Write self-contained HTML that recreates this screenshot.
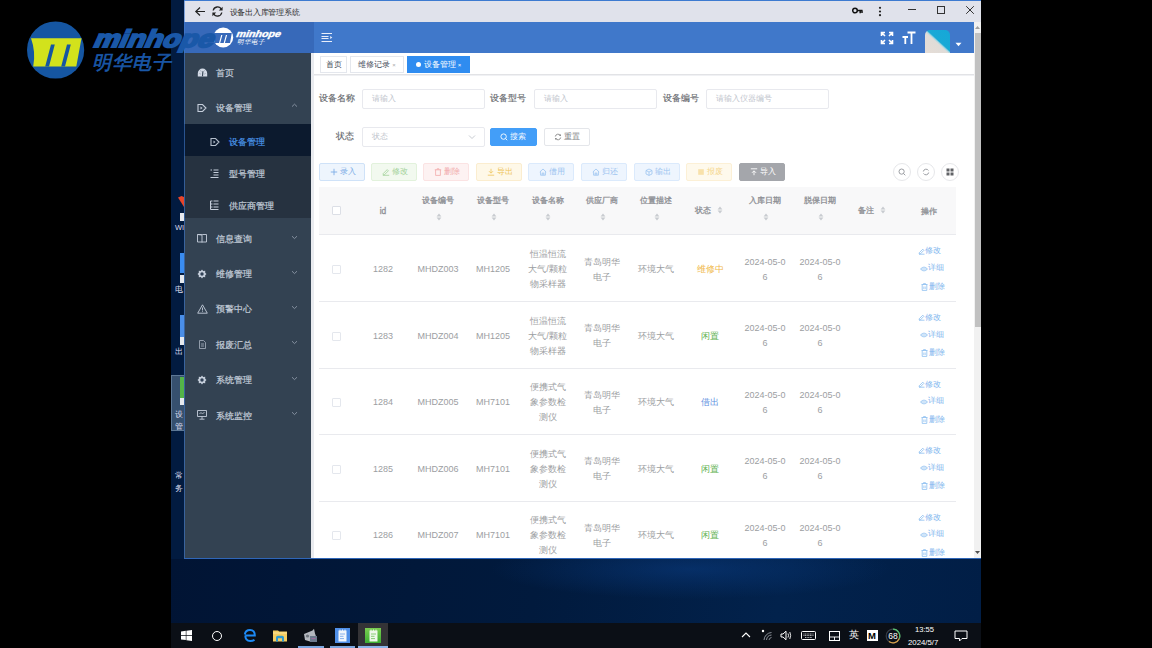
<!DOCTYPE html>
<html><head><meta charset="utf-8">
<style>
*{margin:0;padding:0;box-sizing:border-box}
html,body{width:1152px;height:648px;overflow:hidden;background:#000;font-family:"Liberation Sans",sans-serif}
.a{position:absolute}
.t{position:absolute;white-space:nowrap;line-height:1}
#desk{left:171px;top:0;width:810px;height:623px;background:#021b40}
#taskbar{left:171px;top:623px;width:810px;height:25px;background:#0b0f16}
#win{left:184px;top:0;width:797px;height:558px;background:#fff;border-top:1px solid #3d7ad0}
#titlebar{left:184px;top:1px;width:797px;height:21px;background:#e0e2eb}
#header{left:184px;top:22px;width:790px;height:31px;background:#4078ca}
#side{left:184px;top:53px;width:127px;height:505px;background:#334252}
#scroll{left:974px;top:22px;width:7px;height:536px;background:#f1f1f1}
#thumb{left:975px;top:33px;width:6px;height:294px;background:#c1c1c1}
.mi{color:#c3cdd9;font-size:9px;-webkit-text-stroke:0.2px currentColor}
.sub{left:184px;width:127px;background:#263240}
.tab{position:absolute;top:56px;height:17px;border:1px solid #e4e7ed;background:#fff;color:#495060;font-size:8px;line-height:15px;text-align:center;white-space:nowrap}
.lab{color:#66686d;font-size:9px;-webkit-text-stroke:0.15px #66686d}
.inp{position:absolute;height:20px;border:1px solid #e8e9ee;border-radius:2px;background:#fff;color:#c0c4cc;font-size:8px;line-height:18px;padding-left:9px;white-space:nowrap}
.btn{position:absolute;height:18px;border:1px solid;border-radius:2px;font-size:8px;line-height:16px;text-align:center;white-space:nowrap}
.circ{position:absolute;width:18px;height:18px;border:1px solid #e6e7ea;border-radius:50%;background:#fff}
.hd{position:absolute;width:70px;text-align:center;color:#8e9095;font-size:8.4px;-webkit-text-stroke:0.3px #8e9095;line-height:1;white-space:nowrap}
.cell{position:absolute;width:70px;text-align:center;color:#9c9ea2;font-size:9px;line-height:15px;white-space:nowrap}
.act{position:absolute;color:#7fb6ee;font-size:8px;line-height:1;white-space:nowrap}
</style></head><body>
<div id="desk" class="a"></div>
<div id="taskbar" class="a"></div>
<div id="win" class="a"></div>
<div id="titlebar" class="a"></div>
<div id="header" class="a"></div>
<div id="side" class="a"></div>
<div id="scroll" class="a"></div>
<div id="thumb" class="a"></div>
<!-- titlebar -->
<svg class="a" style="left:194px;top:6px" width="12" height="11" viewBox="0 0 12 11"><path d="M11 5.5H2M6 1.5L1.8 5.5L6 9.5" stroke="#222" stroke-width="1.2" fill="none"/></svg>
<svg class="a" style="left:211px;top:6px" width="13" height="11" viewBox="0 0 13 11"><path d="M2.2 4.5A4.3 4.3 0 0 1 10.4 3.6M10.8 6.5A4.3 4.3 0 0 1 2.6 7.4" stroke="#222" stroke-width="1.3" fill="none"/><path d="M11.6 0.8V4.6H7.8Z M1.4 10.2V6.4H5.2Z" fill="#222"/></svg>
<div class="t" style="left:229.5px;top:8.5px;font-size:8px;letter-spacing:-0.25px;color:#2a2a2a">设备出入库管理系统</div>
<svg class="a" style="left:852px;top:7px" width="11" height="7" viewBox="0 0 11 7"><circle cx="3" cy="3.5" r="2.3" fill="none" stroke="#111" stroke-width="1.5"/><path d="M5 3.5H10.5M8.2 3.5V6.2M10 3.5V6" stroke="#111" stroke-width="1.5"/></svg>
<svg class="a" style="left:878px;top:6px" width="4" height="11" viewBox="0 0 4 11"><circle cx="2" cy="1.8" r="1.1" fill="#222"/><circle cx="2" cy="5.5" r="1.1" fill="#222"/><circle cx="2" cy="9.2" r="1.1" fill="#222"/></svg>
<div class="a" style="left:908px;top:9px;width:8px;height:1px;background:#333"></div>
<div class="a" style="left:937px;top:6px;width:8px;height:8px;border:1px solid #333"></div>
<svg class="a" style="left:965px;top:5px" width="10" height="10" viewBox="0 0 10 10"><path d="M1.2 1.2L8.8 8.8M8.8 1.2L1.2 8.8" stroke="#333" stroke-width="1"/></svg>
<!-- header -->
<div class="a" style="left:184px;top:22px;width:130px;height:31px;background:#3769b9"></div>
<svg class="a" style="left:321px;top:32px" width="12" height="11" viewBox="0 0 12 11"><path d="M0.5 1.5H11M0.5 4.5H7.5M0.5 6.5H7.5M0.5 9.5H11" stroke="#e8eefa" stroke-width="1.2"/><path d="M9.2 4L11.3 5.5L9.2 7Z" fill="#e8eefa"/></svg>
<svg class="a" style="left:880px;top:31px" width="14" height="14" viewBox="0 0 14 14"><g stroke="#fff" stroke-width="1.6" fill="none"><path d="M1.5 1.5L5 5M1.5 5V1.5H5"/><path d="M12.5 1.5L9 5M12.5 5V1.5H9"/><path d="M1.5 12.5L5 9M1.5 9V12.5H5"/><path d="M12.5 12.5L9 9M12.5 9V12.5H9"/></g></svg>
<svg class="a" style="left:902px;top:31px" width="14" height="14" viewBox="0 0 14 14"><g stroke="#fff" stroke-width="1.8" fill="none"><path d="M5.5 1.5H13.5M9.5 1.5V13"/><path d="M0.5 6H6M3.3 6V13"/></g></svg>
<div class="a" style="left:925px;top:30px;width:25px;height:23px;border-radius:5px 5px 0 0;background:linear-gradient(to top right,#e6ddd6 0%,#e0dcd8 46%,#a8d8e2 50%,#18a9d6 54%,#15a8d8 100%)"></div>
<svg class="a" style="left:955px;top:42px" width="7" height="5" viewBox="0 0 7 5"><path d="M0.5 0.8H6.5L3.5 4.2Z" fill="#fff"/></svg>
<div class="a sub" style="top:124px;height:94px"></div>
<div class="a" style="left:184px;top:124px;width:127px;height:32px;background:#0c1a2e"></div>
<svg class="a" style="left:196.5px;top:67.5px" width="11" height="9" viewBox="0 0 11 9"><path d="M0.8 8.5V5.3A4.7 4.7 0 0 1 10.2 5.3V8.5Z" fill="#d3dae6"/><path d="M5.5 8.2L5.9 3.2" stroke="#334252" stroke-width="1.1"/><path d="M2.6 5.5L3.5 6M8.4 5.5L7.5 6M3.6 2.6L4.2 3.4M7.4 2.6L6.8 3.4" stroke="#6c7888" stroke-width="0.8"/></svg>
<div class="t mi" style="left:215.5px;top:69px">首页</div>
<svg class="a" style="left:197px;top:103px" width="10" height="10" viewBox="0 0 10 10"><path d="M1 1.5H5.5L9 5L5.5 8.5H1Z" fill="none" stroke="#c5cedb" stroke-width="1.1"/><path d="M3.5 3.5L5.5 5L3.5 6.5Z" fill="#c5cedb"/></svg>
<div class="t mi" style="left:215.5px;top:104px">设备管理</div>
<svg class="a" style="left:291px;top:103px" width="7" height="5" viewBox="0 0 7 5"><path d="M1 3.6L3.5 1.2L6 3.6" stroke="#8d99a8" stroke-width="0.9" fill="none"/></svg>
<svg class="a" style="left:210px;top:137px" width="10" height="10" viewBox="0 0 10 10"><path d="M1 1.5H5.5L9 5L5.5 8.5H1Z" fill="none" stroke="#b5bfcc" stroke-width="1.1"/><path d="M3.5 3.5L5.5 5L3.5 6.5Z" fill="#b5bfcc"/></svg>
<div class="t mi" style="left:228.5px;top:138px;color:#4a95e8">设备管理</div>
<svg class="a" style="left:210px;top:169px" width="9" height="9" viewBox="0 0 9 9"><path d="M0.5 1H2M3.5 1H8.5M3.5 3.5H8.5M3.5 6H8.5M0.5 8.5H8.5" stroke="#c5cedb" stroke-width="1"/></svg>
<div class="t mi" style="left:228.5px;top:170px">型号管理</div>
<svg class="a" style="left:210px;top:200px" width="9" height="10" viewBox="0 0 9 10"><path d="M0.5 1H2.5M0.5 4H2.5M0.5 7H2.5M0.5 9.5H8.5M0.5 1V9.5M3.5 1H8.5M3.5 4H8.5M3.5 7H8.5" stroke="#c5cedb" stroke-width="1.1"/></svg>
<div class="t mi" style="left:228.5px;top:202px">供应商管理</div>
<svg class="a" style="left:197px;top:234px" width="10" height="9" viewBox="0 0 10 9"><path d="M0.5 0.5H4.5Q5 0.5 5 1V8.5M5 1Q5 0.5 5.5 0.5H9.5V8H0.5V0.5Z" fill="none" stroke="#c5cedb" stroke-width="0.9"/></svg>
<div class="t mi" style="left:215.5px;top:235px">信息查询</div>
<svg class="a" style="left:197px;top:269px" width="10" height="10" viewBox="0 0 10 10"><path d="M5 0.5L6.2 2L8.2 1.8L8.2 3.8L9.5 5L8.2 6.2L8.2 8.2L6.2 8L5 9.5L3.8 8L1.8 8.2L1.8 6.2L0.5 5L1.8 3.8L1.8 1.8L3.8 2Z" fill="#c5cedb"/><circle cx="5" cy="5" r="1.7" fill="#304156"/></svg>
<div class="t mi" style="left:215.5px;top:270px">维修管理</div>
<svg class="a" style="left:197px;top:304px" width="11" height="10" viewBox="0 0 11 10"><path d="M5.5 0.8L10.3 9.2H0.7Z" fill="none" stroke="#c5cedb" stroke-width="0.9"/><path d="M5.5 3.5V6.5M5.5 7.3V8" stroke="#c5cedb" stroke-width="0.9"/></svg>
<div class="t mi" style="left:215.5px;top:305px">预警中心</div>
<svg class="a" style="left:199px;top:340px" width="7" height="9" viewBox="0 0 7 9"><path d="M0.5 0.5H4.5L6.5 2.5V8.5H0.5Z" fill="none" stroke="#aab4c2" stroke-width="0.8"/><path d="M2 4H5M2 6H5" stroke="#aab4c2" stroke-width="0.8"/></svg>
<div class="t mi" style="left:215.5px;top:341px">报废汇总</div>
<svg class="a" style="left:197px;top:375px" width="10" height="10" viewBox="0 0 10 10"><path d="M5 0.5L6.2 2L8.2 1.8L8.2 3.8L9.5 5L8.2 6.2L8.2 8.2L6.2 8L5 9.5L3.8 8L1.8 8.2L1.8 6.2L0.5 5L1.8 3.8L1.8 1.8L3.8 2Z" fill="#c5cedb"/><circle cx="5" cy="5" r="1.7" fill="#304156"/></svg>
<div class="t mi" style="left:215.5px;top:376px">系统管理</div>
<svg class="a" style="left:197px;top:410px" width="10" height="10" viewBox="0 0 10 10"><path d="M0.5 0.5H9.5V6.5H0.5Z M5 6.5V9M2.5 9.2H7.5" fill="none" stroke="#c5cedb" stroke-width="0.9"/><path d="M2.5 4L4 2.5L5.5 4L7.5 2" stroke="#c5cedb" stroke-width="0.8" fill="none"/></svg>
<div class="t mi" style="left:215.5px;top:412px">系统监控</div>
<svg class="a" style="left:291px;top:235px" width="7" height="5" viewBox="0 0 7 5"><path d="M1 1.2L3.5 3.6L6 1.2" stroke="#8d99a8" stroke-width="0.9" fill="none"/></svg>
<svg class="a" style="left:291px;top:270px" width="7" height="5" viewBox="0 0 7 5"><path d="M1 1.2L3.5 3.6L6 1.2" stroke="#8d99a8" stroke-width="0.9" fill="none"/></svg>
<svg class="a" style="left:291px;top:305px" width="7" height="5" viewBox="0 0 7 5"><path d="M1 1.2L3.5 3.6L6 1.2" stroke="#8d99a8" stroke-width="0.9" fill="none"/></svg>
<svg class="a" style="left:291px;top:340px" width="7" height="5" viewBox="0 0 7 5"><path d="M1 1.2L3.5 3.6L6 1.2" stroke="#8d99a8" stroke-width="0.9" fill="none"/></svg>
<svg class="a" style="left:291px;top:376px" width="7" height="5" viewBox="0 0 7 5"><path d="M1 1.2L3.5 3.6L6 1.2" stroke="#8d99a8" stroke-width="0.9" fill="none"/></svg>
<svg class="a" style="left:291px;top:411px" width="7" height="5" viewBox="0 0 7 5"><path d="M1 1.2L3.5 3.6L6 1.2" stroke="#8d99a8" stroke-width="0.9" fill="none"/></svg>
<!-- tabs -->
<div class="a" style="left:311px;top:53px;width:3px;height:505px;background:#e9ebef"></div>
<div class="a" style="left:314px;top:74px;width:660px;height:1px;background:#e2e3e6"></div>
<div class="a" style="left:314px;top:75px;width:660px;height:1px;background:#f0f1f4"></div>
<div class="tab" style="left:320px;width:27px">首页</div>
<div class="tab" style="left:350px;width:54px">维修记录 <span style="font-size:6px;color:#aaa">×</span></div>
<div class="tab" style="left:407px;width:63px;background:#2f8cf0;border-color:#2f8cf0;color:#fff"><span style="display:inline-block;width:5px;height:5px;border-radius:50%;background:#fff;margin-right:3px;vertical-align:0px"></span>设备管理 <span style="font-size:6px">×</span></div>
<!-- form -->
<div class="t lab" style="left:319px;top:93.5px">设备名称</div>
<div class="inp" style="left:362px;top:89px;width:123px">请输入</div>
<div class="t lab" style="left:490px;top:93.5px">设备型号</div>
<div class="inp" style="left:534px;top:89px;width:123px">请输入</div>
<div class="t lab" style="left:663px;top:93.5px">设备编号</div>
<div class="inp" style="left:706px;top:89px;width:123px">请输入仪器编号</div>
<div class="t lab" style="left:336px;top:131.5px">状态</div>
<div class="inp" style="left:362px;top:127px;width:123px">状态</div>
<svg class="a" style="left:468px;top:134px" width="8" height="6" viewBox="0 0 8 6"><path d="M1 1.5L4 4.5L7 1.5" stroke="#c0c4cc" stroke-width="0.9" fill="none"/></svg>
<div class="btn" style="left:490px;top:128px;width:47px;background:#439ef8;border-color:#439ef8;color:#f4f8ff;padding-left:9px">搜索</div><svg class="a" style="left:500px;top:133px" width="8" height="8" viewBox="0 0 8 8"><circle cx="3.6" cy="3.6" r="2.7" fill="none" stroke="#fff" stroke-width="0.9"/><path d="M5.6 5.6L7.2 7.2" stroke="#fff" stroke-width="0.9"/></svg>
<div class="btn" style="left:544px;top:128px;width:46px;background:#fff;border-color:#e4e6ea;color:#7a7c80;padding-left:9px">重置</div><svg class="a" style="left:554px;top:133px" width="8" height="8" viewBox="0 0 8 8"><path d="M1.3 3.5A2.8 2.8 0 0 1 6.5 2.6M6.7 4.5A2.8 2.8 0 0 1 1.5 5.4" fill="none" stroke="#888" stroke-width="0.9"/><path d="M6.9 0.9V3H4.8ZM1.1 7.1V5H3.2Z" fill="#888"/></svg>
<!-- toolbar -->
<div class="btn" style="left:319px;top:163px;width:46px;background:#eef5fd;border-color:#cfe2f8"></div><svg class="a" style="left:330px;top:168px" width="8" height="8" viewBox="0 0 8 8"><path d="M4 0.8V7.2M0.8 4H7.2" stroke="#7eaee6" stroke-width="0.9"/></svg><div class="t" style="left:339.5px;top:167.5px;font-size:8px;color:#7eaee6">录入</div>
<div class="btn" style="left:371px;top:163px;width:46px;background:#f2f9ef;border-color:#e2f2dc"></div><svg class="a" style="left:382px;top:168px" width="8" height="8" viewBox="0 0 8 8"><path d="M0.8 7.3H7.2M1.2 5.6L5.2 1.6L6.4 2.8L2.4 6.8H1.2Z" fill="none" stroke="#a2d29a" stroke-width="0.8"/></svg><div class="t" style="left:391.5px;top:167.5px;font-size:8px;color:#a2d29a">修改</div>
<div class="btn" style="left:423px;top:163px;width:46px;background:#fdf2f2;border-color:#fbe3e3"></div><svg class="a" style="left:434px;top:168px" width="8" height="8" viewBox="0 0 8 8"><path d="M0.8 1.8H7.2M3 1.8V0.8H5V1.8M1.6 1.8V7.4H6.4V1.8" fill="none" stroke="#f1aaaa" stroke-width="0.8"/></svg><div class="t" style="left:443.5px;top:167.5px;font-size:8px;color:#f1aaaa">删除</div>
<div class="btn" style="left:476px;top:163px;width:46px;background:#fef8e8;border-color:#fbedcf"></div><svg class="a" style="left:487px;top:168px" width="8" height="8" viewBox="0 0 8 8"><path d="M4 0.8V5M2 3.2L4 5.2L6 3.2M0.8 7.2H7.2" fill="none" stroke="#eec45a" stroke-width="0.8"/></svg><div class="t" style="left:496.5px;top:167.5px;font-size:8px;color:#eec45a">导出</div>
<div class="btn" style="left:528px;top:163px;width:46px;background:#eef5fe;border-color:#dbeafc"></div><svg class="a" style="left:539px;top:168px" width="8" height="8" viewBox="0 0 8 8"><path d="M0.8 4L4 1L7.2 4M1.6 3.5V7.2H6.4V3.5M3.2 7.2V5H4.8V7.2" fill="none" stroke="#9cc4f0" stroke-width="0.8"/></svg><div class="t" style="left:548.5px;top:167.5px;font-size:8px;color:#9cc4f0">借用</div>
<div class="btn" style="left:581px;top:163px;width:46px;background:#eef5fe;border-color:#dbeafc"></div><svg class="a" style="left:592px;top:168px" width="8" height="8" viewBox="0 0 8 8"><path d="M0.8 4L4 1L7.2 4M1.6 3.5V7.2H6.4V3.5M3.2 7.2V5H4.8V7.2" fill="none" stroke="#9cc4f0" stroke-width="0.8"/></svg><div class="t" style="left:601.5px;top:167.5px;font-size:8px;color:#9cc4f0">归还</div>
<div class="btn" style="left:634px;top:163px;width:46px;background:#eef5fe;border-color:#dbeafc"></div><svg class="a" style="left:645px;top:168px" width="8" height="8" viewBox="0 0 8 8"><path d="M1 2.5L4 1L7 2.5V6L4 7.4L1 6ZM1 2.5L4 4L7 2.5M4 4V7.4" fill="none" stroke="#9cc4f0" stroke-width="0.8"/></svg><div class="t" style="left:654.5px;top:167.5px;font-size:8px;color:#9cc4f0">输出</div>
<div class="btn" style="left:686px;top:163px;width:46px;background:#fef9ec;border-color:#fcf0d6"></div><svg class="a" style="left:697px;top:168px" width="8" height="8" viewBox="0 0 8 8"><rect x="1.2" y="1.2" width="5.6" height="5.6" fill="#f5d78e" opacity=".7"/></svg><div class="t" style="left:706.5px;top:167.5px;font-size:8px;color:#f5d78e">报废</div>
<div class="btn" style="left:739px;top:163px;width:46px;background:#a4a6ab;border-color:#a4a6ab"></div><svg class="a" style="left:750px;top:168px" width="8" height="8" viewBox="0 0 8 8"><path d="M4 7.2V3M2 4.8L4 2.8L6 4.8M0.8 0.8H7.2" fill="none" stroke="#ffffff" stroke-width="0.9"/></svg><div class="t" style="left:759.5px;top:167.5px;font-size:8px;color:#ffffff">导入</div>
<div class="circ" style="left:893px;top:163px"></div><svg class="a" style="left:898px;top:168px" width="8" height="8" viewBox="0 0 8 8"><circle cx="3.6" cy="3.6" r="2.6" fill="none" stroke="#909399" stroke-width="0.9"/><path d="M5.5 5.5L7.3 7.3" stroke="#909399" stroke-width="0.9"/></svg>
<div class="circ" style="left:917px;top:163px"></div><svg class="a" style="left:922px;top:168px" width="8" height="8" viewBox="0 0 8 8"><path d="M1.3 3.5A2.8 2.8 0 0 1 6.5 2.6M6.7 4.5A2.8 2.8 0 0 1 1.5 5.4" fill="none" stroke="#909399" stroke-width="0.9"/></svg>
<div class="circ" style="left:941px;top:163px"></div><svg class="a" style="left:946px;top:168px" width="8" height="8" viewBox="0 0 8 8"><rect x="0.5" y="0.5" width="3" height="3" fill="#606266"/><rect x="4.5" y="0.5" width="3" height="3" fill="#606266"/><rect x="0.5" y="4.5" width="3" height="3" fill="#606266"/><rect x="4.5" y="4.5" width="3" height="3" fill="#606266"/></svg>
<div class="a" style="left:319px;top:187px;width:637px;height:48px;background:#f8f8f9"></div>
<div class="a" style="left:319px;top:234px;width:637px;height:1px;background:#e9eaee"></div>
<div class="a" style="left:332px;top:206px;width:9px;height:9px;border:1px solid #dcdfe6;border-radius:1px;background:#fff"></div>
<div class="hd" style="left:348px;top:207px">id</div>
<div class="hd" style="left:403px;top:196px">设备编号</div>
<svg class="a" style="left:435.5px;top:213px" width="6" height="8" viewBox="0 0 6 8"><path d="M0.6 3.4L3 0.6L5.4 3.4ZM0.6 4.6L3 7.4L5.4 4.6Z" fill="#c8cbd0"/></svg>
<div class="hd" style="left:458px;top:196px">设备型号</div>
<svg class="a" style="left:490.5px;top:213px" width="6" height="8" viewBox="0 0 6 8"><path d="M0.6 3.4L3 0.6L5.4 3.4ZM0.6 4.6L3 7.4L5.4 4.6Z" fill="#c8cbd0"/></svg>
<div class="hd" style="left:512.5px;top:196px">设备名称</div>
<svg class="a" style="left:545.0px;top:213px" width="6" height="8" viewBox="0 0 6 8"><path d="M0.6 3.4L3 0.6L5.4 3.4ZM0.6 4.6L3 7.4L5.4 4.6Z" fill="#c8cbd0"/></svg>
<div class="hd" style="left:567px;top:196px">供应厂商</div>
<svg class="a" style="left:599.5px;top:213px" width="6" height="8" viewBox="0 0 6 8"><path d="M0.6 3.4L3 0.6L5.4 3.4ZM0.6 4.6L3 7.4L5.4 4.6Z" fill="#c8cbd0"/></svg>
<div class="hd" style="left:621px;top:196px">位置描述</div>
<svg class="a" style="left:653.5px;top:213px" width="6" height="8" viewBox="0 0 6 8"><path d="M0.6 3.4L3 0.6L5.4 3.4ZM0.6 4.6L3 7.4L5.4 4.6Z" fill="#c8cbd0"/></svg>
<div class="hd" style="left:730px;top:196px">入库日期</div>
<svg class="a" style="left:762.5px;top:213px" width="6" height="8" viewBox="0 0 6 8"><path d="M0.6 3.4L3 0.6L5.4 3.4ZM0.6 4.6L3 7.4L5.4 4.6Z" fill="#c8cbd0"/></svg>
<div class="hd" style="left:785px;top:196px">脱保日期</div>
<svg class="a" style="left:817.5px;top:213px" width="6" height="8" viewBox="0 0 6 8"><path d="M0.6 3.4L3 0.6L5.4 3.4ZM0.6 4.6L3 7.4L5.4 4.6Z" fill="#c8cbd0"/></svg>
<div class="hd" style="left:668px;top:206px">状态</div>
<svg class="a" style="left:716.5px;top:206px" width="6" height="8" viewBox="0 0 6 8"><path d="M0.6 3.4L3 0.6L5.4 3.4ZM0.6 4.6L3 7.4L5.4 4.6Z" fill="#c8cbd0"/></svg>
<div class="hd" style="left:831px;top:206px">备注</div>
<svg class="a" style="left:879.5px;top:206px" width="6" height="8" viewBox="0 0 6 8"><path d="M0.6 3.4L3 0.6L5.4 3.4ZM0.6 4.6L3 7.4L5.4 4.6Z" fill="#c8cbd0"/></svg>
<div class="hd" style="left:894px;top:207px">操作</div>
<div class="a" style="left:319px;top:301.0px;width:637px;height:1px;background:#e9eaee"></div>
<div class="a" style="left:332px;top:265.0px;width:9px;height:9px;border:1px solid #e4e7ed;border-radius:1px;background:#fff"></div>
<div class="cell" style="left:348px;top:262.0px">1282</div>
<div class="cell" style="left:403px;top:262.0px">MHDZ003</div>
<div class="cell" style="left:458px;top:262.0px">MH1205</div>
<div class="cell" style="left:512.5px;top:247.0px">恒温恒流<br>大气/颗粒<br>物采样器</div>
<div class="cell" style="left:567px;top:254.5px">青岛明华<br>电子</div>
<div class="cell" style="left:621px;top:262.0px">环境大气</div>
<div class="cell" style="left:675px;top:262.0px"><span style="color:#f0b848">维修中</span></div>
<div class="cell" style="left:730px;top:254.5px">2024-05-0<br>6</div>
<div class="cell" style="left:785px;top:254.5px">2024-05-0<br>6</div>
<svg class="a" style="left:917.5px;top:247.5px" width="7" height="7" viewBox="0 0 7 7"><path d="M1 6.2H6.5M1.2 4.8L4.8 1.2L5.9 2.3L2.3 5.9H1.2Z" fill="none" stroke="#8cbef0" stroke-width="0.8"/></svg>
<div class="act" style="left:925px;top:247.3px">修改</div>
<svg class="a" style="left:920px;top:265.5px" width="8" height="6" viewBox="0 0 8 6"><path d="M0.5 3Q4 -0.8 7.5 3Q4 6.8 0.5 3Z" fill="none" stroke="#8cbef0" stroke-width="0.8"/><path d="M1.5 3H6.5" stroke="#8cbef0" stroke-width="0.8"/></svg>
<div class="act" style="left:928px;top:264.0px">详细</div>
<svg class="a" style="left:920.5px;top:282.5px" width="7" height="8" viewBox="0 0 7 8"><path d="M0.5 1.5H6.5M2.5 1.5V0.6H4.5V1.5M1.2 1.5V7.4H5.8V1.5" fill="none" stroke="#8cbef0" stroke-width="0.8"/><path d="M2.8 3.5V6M4.2 3.5V6" stroke="#8cbef0" stroke-width="0.7"/></svg>
<div class="act" style="left:928.5px;top:282.5px">删除</div>
<div class="a" style="left:319px;top:367.6px;width:637px;height:1px;background:#e9eaee"></div>
<div class="a" style="left:332px;top:331.6px;width:9px;height:9px;border:1px solid #e4e7ed;border-radius:1px;background:#fff"></div>
<div class="cell" style="left:348px;top:328.6px">1283</div>
<div class="cell" style="left:403px;top:328.6px">MHDZ004</div>
<div class="cell" style="left:458px;top:328.6px">MH1205</div>
<div class="cell" style="left:512.5px;top:313.6px">恒温恒流<br>大气/颗粒<br>物采样器</div>
<div class="cell" style="left:567px;top:321.1px">青岛明华<br>电子</div>
<div class="cell" style="left:621px;top:328.6px">环境大气</div>
<div class="cell" style="left:675px;top:328.6px"><span style="color:#5ab04a">闲置</span></div>
<div class="cell" style="left:730px;top:321.1px">2024-05-0<br>6</div>
<div class="cell" style="left:785px;top:321.1px">2024-05-0<br>6</div>
<svg class="a" style="left:917.5px;top:314.1px" width="7" height="7" viewBox="0 0 7 7"><path d="M1 6.2H6.5M1.2 4.8L4.8 1.2L5.9 2.3L2.3 5.9H1.2Z" fill="none" stroke="#8cbef0" stroke-width="0.8"/></svg>
<div class="act" style="left:925px;top:313.9px">修改</div>
<svg class="a" style="left:920px;top:332.1px" width="8" height="6" viewBox="0 0 8 6"><path d="M0.5 3Q4 -0.8 7.5 3Q4 6.8 0.5 3Z" fill="none" stroke="#8cbef0" stroke-width="0.8"/><path d="M1.5 3H6.5" stroke="#8cbef0" stroke-width="0.8"/></svg>
<div class="act" style="left:928px;top:330.6px">详细</div>
<svg class="a" style="left:920.5px;top:349.1px" width="7" height="8" viewBox="0 0 7 8"><path d="M0.5 1.5H6.5M2.5 1.5V0.6H4.5V1.5M1.2 1.5V7.4H5.8V1.5" fill="none" stroke="#8cbef0" stroke-width="0.8"/><path d="M2.8 3.5V6M4.2 3.5V6" stroke="#8cbef0" stroke-width="0.7"/></svg>
<div class="act" style="left:928.5px;top:349.1px">删除</div>
<div class="a" style="left:319px;top:434.2px;width:637px;height:1px;background:#e9eaee"></div>
<div class="a" style="left:332px;top:398.2px;width:9px;height:9px;border:1px solid #e4e7ed;border-radius:1px;background:#fff"></div>
<div class="cell" style="left:348px;top:395.2px">1284</div>
<div class="cell" style="left:403px;top:395.2px">MHDZ005</div>
<div class="cell" style="left:458px;top:395.2px">MH7101</div>
<div class="cell" style="left:512.5px;top:380.2px">便携式气<br>象参数检<br>测仪</div>
<div class="cell" style="left:567px;top:387.7px">青岛明华<br>电子</div>
<div class="cell" style="left:621px;top:395.2px">环境大气</div>
<div class="cell" style="left:675px;top:395.2px"><span style="color:#5a8ee0">借出</span></div>
<div class="cell" style="left:730px;top:387.7px">2024-05-0<br>6</div>
<div class="cell" style="left:785px;top:387.7px">2024-05-0<br>6</div>
<svg class="a" style="left:917.5px;top:380.7px" width="7" height="7" viewBox="0 0 7 7"><path d="M1 6.2H6.5M1.2 4.8L4.8 1.2L5.9 2.3L2.3 5.9H1.2Z" fill="none" stroke="#8cbef0" stroke-width="0.8"/></svg>
<div class="act" style="left:925px;top:380.5px">修改</div>
<svg class="a" style="left:920px;top:398.7px" width="8" height="6" viewBox="0 0 8 6"><path d="M0.5 3Q4 -0.8 7.5 3Q4 6.8 0.5 3Z" fill="none" stroke="#8cbef0" stroke-width="0.8"/><path d="M1.5 3H6.5" stroke="#8cbef0" stroke-width="0.8"/></svg>
<div class="act" style="left:928px;top:397.2px">详细</div>
<svg class="a" style="left:920.5px;top:415.7px" width="7" height="8" viewBox="0 0 7 8"><path d="M0.5 1.5H6.5M2.5 1.5V0.6H4.5V1.5M1.2 1.5V7.4H5.8V1.5" fill="none" stroke="#8cbef0" stroke-width="0.8"/><path d="M2.8 3.5V6M4.2 3.5V6" stroke="#8cbef0" stroke-width="0.7"/></svg>
<div class="act" style="left:928.5px;top:415.7px">删除</div>
<div class="a" style="left:319px;top:500.8px;width:637px;height:1px;background:#e9eaee"></div>
<div class="a" style="left:332px;top:464.8px;width:9px;height:9px;border:1px solid #e4e7ed;border-radius:1px;background:#fff"></div>
<div class="cell" style="left:348px;top:461.8px">1285</div>
<div class="cell" style="left:403px;top:461.8px">MHDZ006</div>
<div class="cell" style="left:458px;top:461.8px">MH7101</div>
<div class="cell" style="left:512.5px;top:446.8px">便携式气<br>象参数检<br>测仪</div>
<div class="cell" style="left:567px;top:454.3px">青岛明华<br>电子</div>
<div class="cell" style="left:621px;top:461.8px">环境大气</div>
<div class="cell" style="left:675px;top:461.8px"><span style="color:#5ab04a">闲置</span></div>
<div class="cell" style="left:730px;top:454.3px">2024-05-0<br>6</div>
<div class="cell" style="left:785px;top:454.3px">2024-05-0<br>6</div>
<svg class="a" style="left:917.5px;top:447.3px" width="7" height="7" viewBox="0 0 7 7"><path d="M1 6.2H6.5M1.2 4.8L4.8 1.2L5.9 2.3L2.3 5.9H1.2Z" fill="none" stroke="#8cbef0" stroke-width="0.8"/></svg>
<div class="act" style="left:925px;top:447.1px">修改</div>
<svg class="a" style="left:920px;top:465.3px" width="8" height="6" viewBox="0 0 8 6"><path d="M0.5 3Q4 -0.8 7.5 3Q4 6.8 0.5 3Z" fill="none" stroke="#8cbef0" stroke-width="0.8"/><path d="M1.5 3H6.5" stroke="#8cbef0" stroke-width="0.8"/></svg>
<div class="act" style="left:928px;top:463.8px">详细</div>
<svg class="a" style="left:920.5px;top:482.3px" width="7" height="8" viewBox="0 0 7 8"><path d="M0.5 1.5H6.5M2.5 1.5V0.6H4.5V1.5M1.2 1.5V7.4H5.8V1.5" fill="none" stroke="#8cbef0" stroke-width="0.8"/><path d="M2.8 3.5V6M4.2 3.5V6" stroke="#8cbef0" stroke-width="0.7"/></svg>
<div class="act" style="left:928.5px;top:482.3px">删除</div>
<div class="a" style="left:332px;top:531.4px;width:9px;height:9px;border:1px solid #e4e7ed;border-radius:1px;background:#fff"></div>
<div class="cell" style="left:348px;top:528.4px">1286</div>
<div class="cell" style="left:403px;top:528.4px">MHDZ007</div>
<div class="cell" style="left:458px;top:528.4px">MH7101</div>
<div class="cell" style="left:512.5px;top:513.4px">便携式气<br>象参数检<br>测仪</div>
<div class="cell" style="left:567px;top:520.9px">青岛明华<br>电子</div>
<div class="cell" style="left:621px;top:528.4px">环境大气</div>
<div class="cell" style="left:675px;top:528.4px"><span style="color:#5ab04a">闲置</span></div>
<div class="cell" style="left:730px;top:520.9px">2024-05-0<br>6</div>
<div class="cell" style="left:785px;top:520.9px">2024-05-0<br>6</div>
<svg class="a" style="left:917.5px;top:513.9px" width="7" height="7" viewBox="0 0 7 7"><path d="M1 6.2H6.5M1.2 4.8L4.8 1.2L5.9 2.3L2.3 5.9H1.2Z" fill="none" stroke="#8cbef0" stroke-width="0.8"/></svg>
<div class="act" style="left:925px;top:513.7px">修改</div>
<svg class="a" style="left:920px;top:531.9px" width="8" height="6" viewBox="0 0 8 6"><path d="M0.5 3Q4 -0.8 7.5 3Q4 6.8 0.5 3Z" fill="none" stroke="#8cbef0" stroke-width="0.8"/><path d="M1.5 3H6.5" stroke="#8cbef0" stroke-width="0.8"/></svg>
<div class="act" style="left:928px;top:530.4px">详细</div>
<svg class="a" style="left:920.5px;top:548.9px" width="7" height="8" viewBox="0 0 7 8"><path d="M0.5 1.5H6.5M2.5 1.5V0.6H4.5V1.5M1.2 1.5V7.4H5.8V1.5" fill="none" stroke="#8cbef0" stroke-width="0.8"/><path d="M2.8 3.5V6M4.2 3.5V6" stroke="#8cbef0" stroke-width="0.7"/></svg>
<div class="act" style="left:928.5px;top:548.9px">删除</div>
<!-- window frame borders -->
<div class="a" style="left:184px;top:0;width:1px;height:558px;background:#3d7ad0;opacity:.6"></div>
<!-- bottom desktop strip (clips overflow) -->
<div class="a" style="left:171px;top:559px;width:810px;height:64px;background:radial-gradient(ellipse 200px 30px at 520px 10px,rgba(10,60,130,.55) 0%,rgba(3,40,90,0) 100%),linear-gradient(100deg,#011434 0%,#011a3d 45%,#02224c 75%,#011e46 100%)"></div>
<div class="a" style="left:184px;top:558px;width:797px;height:1px;background:#2f66b8"></div>
<!-- desktop left icons -->
<svg class="a" style="left:178px;top:196px" width="6" height="11" viewBox="0 0 6 11"><path d="M0 1.5L3.5 0L6 1V11Z" fill="#e8452a"/></svg>
<div class="a" style="left:180px;top:213px;width:4px;height:8px;background:#e6e9ee"></div>
<div class="t" style="left:175px;top:224px;font-size:7.5px;color:#dde">WI</div>
<div class="a" style="left:180px;top:253px;width:4px;height:20px;background:#3a8cf0"></div>
<div class="a" style="left:180px;top:275px;width:4px;height:8px;background:#e6e9ee"></div>
<div class="t" style="left:175px;top:286px;font-size:8px;color:#dde">电</div>
<div class="a" style="left:180px;top:315px;width:4px;height:22px;background:#4a8ee8"></div>
<div class="a" style="left:180px;top:337px;width:4px;height:8px;background:#e6e9ee"></div>
<div class="t" style="left:175px;top:348px;font-size:8px;color:#dde">出</div>
<div class="a" style="left:171px;top:375px;width:13px;height:56px;background:#36506e;border:1px solid #5d7896;border-right:none"></div>
<div class="a" style="left:180px;top:377px;width:4px;height:21px;background:#54b448"></div>
<div class="a" style="left:180px;top:398px;width:4px;height:7px;background:#e6e9ee"></div>
<div class="t" style="left:175px;top:411px;font-size:8px;color:#dde">设</div>
<div class="t" style="left:175px;top:423px;font-size:8px;color:#dde">管</div>
<div class="t" style="left:175px;top:472px;font-size:8px;color:#dde">常</div>
<div class="t" style="left:175px;top:485px;font-size:8px;color:#dde">务</div>
<svg class="a" style="left:974px;top:24px" width="7" height="7" viewBox="0 0 7 7"><path d="M1 5L3.5 2L6 5Z" fill="#a0a0a0"/></svg>
<svg class="a" style="left:974px;top:549px" width="7" height="7" viewBox="0 0 7 7"><path d="M1 2L3.5 5L6 2Z" fill="#505050"/></svg>
<!-- taskbar -->
<svg class="a" style="left:181px;top:630px" width="11" height="11" viewBox="0 0 11 11"><path d="M0 1.5L4.8 0.8V5.1H0ZM5.4 0.7L11 0V5.1H5.4ZM0 5.7H4.8V10.1L0 9.4ZM5.4 5.7H11V11L5.4 10.2Z" fill="#fff"/></svg>
<div class="a" style="left:212px;top:631px;width:10px;height:10px;border:1.5px solid #fff;border-radius:50%"></div>
<svg class="a" style="left:243px;top:628px" width="14" height="15" viewBox="0 0 14 15"><path d="M2.3 7.6H11.8Q11.9 2 7 2Q2.5 2 1.8 6.5M2.3 7.6Q2.3 13 7.2 13Q9.6 13 11.5 11.8" fill="none" stroke="#1d8af5" stroke-width="2"/></svg>
<svg class="a" style="left:273px;top:629px" width="14" height="13" viewBox="0 0 14 13"><path d="M0 1.5H5L6.2 2.5H14V12.5H0Z" fill="#f4cd62"/><path d="M0 4H14" stroke="#fbe49c" stroke-width="1"/><path d="M3 12.5V8.5Q3 6.8 4.8 6.8H9.2Q11 6.8 11 8.5V12.5H9V9.2H5V12.5Z" fill="#2e9ad0"/></svg>
<svg class="a" style="left:303px;top:628px" width="16" height="15" viewBox="0 0 16 15"><path d="M1 6L9.5 2.5L11 0.8L12 5.5L13.5 9.5L7 13.5L2 12Z" fill="#b4b8bf"/><path d="M7 8H14V14H7Z" fill="#6c7a8e"/><path d="M8.5 10.5H12.5" stroke="#a06aa0" stroke-width="1"/><circle cx="4.5" cy="8" r="1.6" fill="#6d737c"/></svg>
<div class="a" style="left:335px;top:628px;width:15px;height:15px;background:#4f8fe8"></div>
<svg class="a" style="left:338px;top:629px" width="9" height="13" viewBox="0 0 9 13"><path d="M0.5 1.5H8.5V12.5H0.5Z" fill="#f2f6fc"/><path d="M2 0.5V2.5M4.5 0.5V2.5M7 0.5V2.5" stroke="#f2f6fc" stroke-width="0.9"/><path d="M2 5H7M2 7.3H5.5M2 9.6H6" stroke="#6c9ee6" stroke-width="0.8"/></svg>
<div class="a" style="left:358px;top:623px;width:30px;height:25px;background:#343336"></div>
<div class="a" style="left:365px;top:628px;width:16px;height:15px;background:linear-gradient(#7acd52,#3cae32)"></div>
<svg class="a" style="left:368.5px;top:629px" width="9" height="13" viewBox="0 0 9 13"><path d="M0.5 1.5H8.5V12.5H0.5Z" fill="#eef8ea"/><path d="M2 0.5V2.5M4.5 0.5V2.5M7 0.5V2.5" stroke="#eef8ea" stroke-width="0.9"/><path d="M2 5H7M2 7.3H5.5M2 9.6H6" stroke="#6cc058" stroke-width="0.8"/></svg>
<div class="a" style="left:298px;top:646px;width:26px;height:2px;background:#7aa6e0"></div>
<div class="a" style="left:330px;top:646px;width:25px;height:2px;background:#7aa6e0"></div>
<div class="a" style="left:358px;top:646px;width:30px;height:2px;background:#8ab4ea"></div>
<svg class="a" style="left:741px;top:632px" width="10" height="6" viewBox="0 0 10 6"><path d="M1 5L5 1L9 5" stroke="#fff" stroke-width="1.1" fill="none"/></svg>
<svg class="a" style="left:761px;top:629px" width="11" height="12" viewBox="0 0 11 12"><circle cx="2" cy="2" r="1.2" fill="#fff"/><path d="M3 11A8 8 0 0 1 10.5 3.5M5.5 11A5.5 5.5 0 0 1 10.5 6M8 11A3 3 0 0 1 10.5 8.5" stroke="#8a8f98" stroke-width="1" fill="none"/></svg>
<svg class="a" style="left:780px;top:630px" width="12" height="11" viewBox="0 0 12 11"><path d="M1 4H3L6 1.2V9.8L3 7H1Z" fill="none" stroke="#fff" stroke-width="1"/><path d="M8 3.5Q9 5.5 8 7.5M9.8 2Q11.5 5.5 9.8 9" stroke="#fff" stroke-width="0.9" fill="none"/></svg>
<svg class="a" style="left:801px;top:631px" width="15" height="9" viewBox="0 0 15 9"><rect x="0.5" y="0.5" width="14" height="8" rx="1" fill="none" stroke="#fff" stroke-width="1"/><path d="M2.5 3H12.5M2.5 4.5H12.5M4 6.5H11" stroke="#fff" stroke-width="0.7" stroke-dasharray="1 0.6"/></svg>
<svg class="a" style="left:829px;top:631px" width="11" height="10" viewBox="0 0 11 10"><rect x="0.5" y="0.5" width="10" height="9" fill="none" stroke="#fff" stroke-width="1"/><path d="M0.5 6H10.5M5.5 6V9.5" stroke="#fff" stroke-width="0.9"/></svg>
<div class="t" style="left:849px;top:630px;font-size:10px;color:#fff">英</div>
<div class="a" style="left:867px;top:630px;width:11px;height:11px;background:#fff"></div>
<div class="t" style="left:868px;top:631px;font-size:9.5px;font-weight:bold;color:#000">M</div>
<svg class="a" style="left:885px;top:628px" width="16" height="16" viewBox="0 0 16 16"><circle cx="8" cy="8" r="6.8" fill="none" stroke="#3a3f48" stroke-width="1.2"/><path d="M8 1.2A6.8 6.8 0 0 1 14.2 10.8" stroke="#58c070" stroke-width="1.3" fill="none"/><path d="M14.2 10.8A6.8 6.8 0 0 1 4 13.5" stroke="#d8a048" stroke-width="1.3" fill="none"/></svg>
<div class="t" style="left:885px;top:632px;width:16px;text-align:center;font-size:8.5px;color:#fff">68</div>
<div class="t" style="left:915px;top:626px;font-size:7.6px;color:#fff">13:55</div>
<div class="t" style="left:908px;top:639px;font-size:7.8px;color:#fff">2024/5/7</div>
<svg class="a" style="left:954px;top:630px" width="14" height="12" viewBox="0 0 14 12"><path d="M1 1H13V8.5H8L5.5 11V8.5H1Z" fill="none" stroke="#fff" stroke-width="1"/></svg>
<!-- header logo -->
<svg class="a" style="left:212px;top:27px" width="22" height="22" viewBox="0 0 22 22"><circle cx="11.2" cy="10.5" r="10" fill="#fff"/><path d="M0.5 6H19.8L18 16H2.2Q3.5 11 0.5 6Z" fill="#3769b9"/><path d="M9.2 8L10.4 8L8.2 16H7ZM13.9 8L15.1 8L12.9 16H11.7Z" fill="#fff"/></svg>
<div class="t" style="left:236px;top:29px;font-size:9.5px;font-weight:bold;color:#fff;transform:skewX(-22deg) scaleX(1.12);transform-origin:0 7px;-webkit-text-stroke:0.4px #fff">minhope</div>
<div class="t" style="left:237px;top:39px;font-size:6.5px;color:#fff;font-style:italic">明华电子</div>
<!-- watermark logo -->
<svg class="a" style="left:26px;top:21px" width="60" height="59" viewBox="0 0 60 59"><circle cx="29.6" cy="29" r="28.6" fill="#1556a2"/><path d="M5 17.2H55.5L50.3 45.5H7.2Q10 31 5 17.2Z" fill="#d2e21c"/><path d="M25 23.5H28.8L23 45.5H19.2ZM41 23.5H44.8L39 45.5H35.2Z" fill="#1556a2"/></svg>
<div class="t" style="left:91px;top:27px;font-size:24px;font-weight:bold;color:#1a58a8;transform:skewX(-24deg) scaleX(1.2);transform-origin:0 22px;letter-spacing:0px;-webkit-text-stroke:2px #1a58a8">minhope</div>
<div class="t" style="left:92px;top:53px;font-size:19px;font-style:italic;color:#1a58a8;letter-spacing:1px;-webkit-text-stroke:0.6px #1a58a8">明华电子</div>
</body></html>
